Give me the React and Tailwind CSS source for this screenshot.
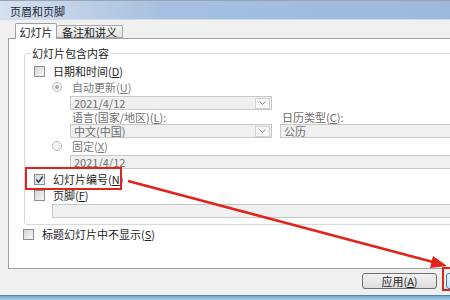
import React from "react";

const font = { fontFamily: '"Noto Sans CJK SC", "Noto Sans", sans-serif' };

function CheckBox({ checked }) {
  return (
    <span className="flex h-[11px] w-[11px] shrink-0 items-center justify-center border border-[#8e8f8f] bg-linear-to-br from-[#d4d4d4] to-[#f8f8f8]">
      {checked && (
        <svg width="9" height="9" viewBox="0 0 9 9">
          <path d="M1.3 4.6 L3.5 7.2 L7.8 1.4" fill="none" stroke="#263f6e" strokeWidth="1.6" />
        </svg>
      )}
    </span>
  );
}

function Radio({ selected }) {
  return (
    <span className="flex h-[10px] w-[10px] shrink-0 items-center justify-center rounded-full border border-[#b9b9b9] bg-[#f3f3f3]">
      {selected && <span className="h-[4px] w-[4px] rounded-full bg-[#a9a9a9]" />}
    </span>
  );
}

function Combo({ value, className }) {
  return (
    <div className={`flex h-[14px] items-center border border-[#c8c8c8] bg-[#f0f0f0] pl-[3px] text-[#6d6d6d] ${className}`}>
      <span className="flex-1 leading-[12px]">{value}</span>
      <span className="mr-[1px] flex h-[11px] w-[15px] items-center justify-center border border-[#d2d2d2] bg-[#f7f7f7]">
        <svg width="7" height="4" viewBox="0 0 7 4">
          <path d="M0.5 0.5 L3.5 3.5 L6.5 0.5" fill="none" stroke="#8a8a8a" strokeWidth="1" />
        </svg>
      </span>
    </div>
  );
}

function Field({ value, className }) {
  return (
    <div className={`flex h-[14px] items-center border border-[#c8c8c8] bg-[#f0f0f0] pl-[3px] leading-[12px] text-[#6d6d6d] ${className}`}>
      {value}
    </div>
  );
}

export default function App() {
  return (
    <div className="relative flex h-[300px] w-[450px] flex-col overflow-hidden bg-[#f0f0f0] text-[11px] text-[#1e1e1e]" style={font}>
      {/* Title bar */}
      <div className="flex h-[20px] items-center border-t border-b border-t-[#98a4b4] border-b-[#d3dbe9] bg-linear-to-r from-[#d6e1ed] via-[#a6c1e0] via-35% to-[#9cb9db] pl-[10px] pt-[2px] leading-[12px] text-[#1f2a38]">
        页眉和页脚
      </div>

      {/* Tabs */}
      <div className="flex h-[18px] items-end pl-[15px]">
        <div className="relative z-10 -mb-px flex h-[16px] w-[42px] items-center justify-center rounded-t-[2px] border border-b-0 border-[#a0a0a0] bg-white leading-[12px]">
          幻灯片
        </div>
        <div className="flex h-[13px] w-[66px] items-center justify-center rounded-t-[2px] border border-l-0 border-[#a8a8a8] bg-linear-to-b from-[#f4f4f4] to-[#e2e2e2] leading-[12px]">
          备注和讲义
        </div>
      </div>

      {/* Tab panel */}
      <div className="ml-[8px] flex h-[231px] w-[470px] flex-col border border-[#a0a0a0] bg-white">
        <fieldset className="ml-[15px] mt-[8px] w-[440px] rounded-[3px] border border-[#d5d9de] pb-[6px]">
          <legend className="ml-[6px] px-[1px] leading-[12px]">幻灯片包含内容</legend>

          <div className="mt-[5px] flex h-[14px] items-center pl-[9px]">
            <CheckBox />
            <span className="ml-[8px] leading-[12px]">日期和时间(<u>D</u>)</span>
          </div>

          <div className="mt-[2px] flex h-[14px] items-center pl-[27px] text-[#7a7a7a]">
            <Radio selected />
            <span className="ml-[10px] leading-[12px]">自动更新(<u>U</u>)</span>
          </div>

          <Combo value="2021/4/12" className="ml-[45px] mt-[2px] w-[202px]" />

          <div className="mt-[1px] flex h-[12px] items-center pl-[45px] leading-[12px] text-[#6d6d6d]">
            <span className="w-[210px] pl-[2px]">语言(国家/地区)(<u>L</u>):</span>
            <span className="pl-[2px]">日历类型(<u>C</u>):</span>
          </div>

          <div className="mt-[1px] flex pl-[45px]">
            <Combo value="中文(中国)" className="w-[202px]" />
            <Field value="公历" className="ml-[8px] flex-1" />
          </div>

          <div className="mt-[1px] flex h-[14px] items-center pl-[27px] text-[#7a7a7a]">
            <Radio />
            <span className="ml-[10px] leading-[12px]">固定(<u>X</u>)</span>
          </div>

          <Field value="2021/4/12" className="ml-[45px] mt-[2px]" />

          <div className="mt-[3px] flex h-[14px] items-center pl-[9px]">
            <CheckBox checked />
            <span className="ml-[8px] leading-[12px]">幻灯片编号(<u>N</u>)</span>
          </div>

          <div className="mt-[2px] flex h-[14px] items-center pl-[9px]">
            <CheckBox />
            <span className="ml-[8px] leading-[12px]">页脚(<u>F</u>)</span>
          </div>

          <Field value="" className="ml-[27px] mt-[2px]" />
        </fieldset>

        <div className="ml-[14px] mt-[2px] flex h-[14px] items-center">
          <CheckBox />
          <span className="ml-[8px] leading-[12px]">标题幻灯片中不显示(<u>S</u>)</span>
        </div>
      </div>

      {/* Buttons */}
      <div className="flex h-[26px] items-start gap-[9px] pl-[362px] pt-[4px]">
        <button className="flex h-[16px] w-[75px] shrink-0 items-center justify-center rounded-[3px] border border-[#707070] bg-linear-to-b from-[#f3f3f3] to-[#dcdcdc] leading-[12px]">
          应用(<u>A</u>)
        </button>
        {/* default button, only its left edge is in view */}
        <button className="h-[16px] w-[75px] shrink-0 rounded-[3px] border border-[#3c7fb1] bg-linear-to-b from-[#eaf6fd] to-[#bee6fd]" />
      </div>

      {/* Window bottom frame */}
      <div className="h-[5px] border-t border-[#4a86ad] bg-linear-to-b from-[#6fa6cc] to-[#a9cde6]" />

      {/* Annotations */}
      <div className="pointer-events-none absolute left-[25px] top-[167px] h-[23px] w-[97px] border-2 border-[#e2231a]" />
      <div className="pointer-events-none absolute left-[442px] top-[267px] h-[24px] w-[14px] border-2 border-[#e2231a]" />
      <svg className="pointer-events-none absolute left-0 top-0" width="450" height="300" viewBox="0 0 450 300">
        <line x1="128" y1="181" x2="433" y2="262" stroke="#e2231a" strokeWidth="2.5" />
        <polygon points="447,266 430,268 433,256" fill="#e2231a" />
      </svg>
    </div>
  );
}
